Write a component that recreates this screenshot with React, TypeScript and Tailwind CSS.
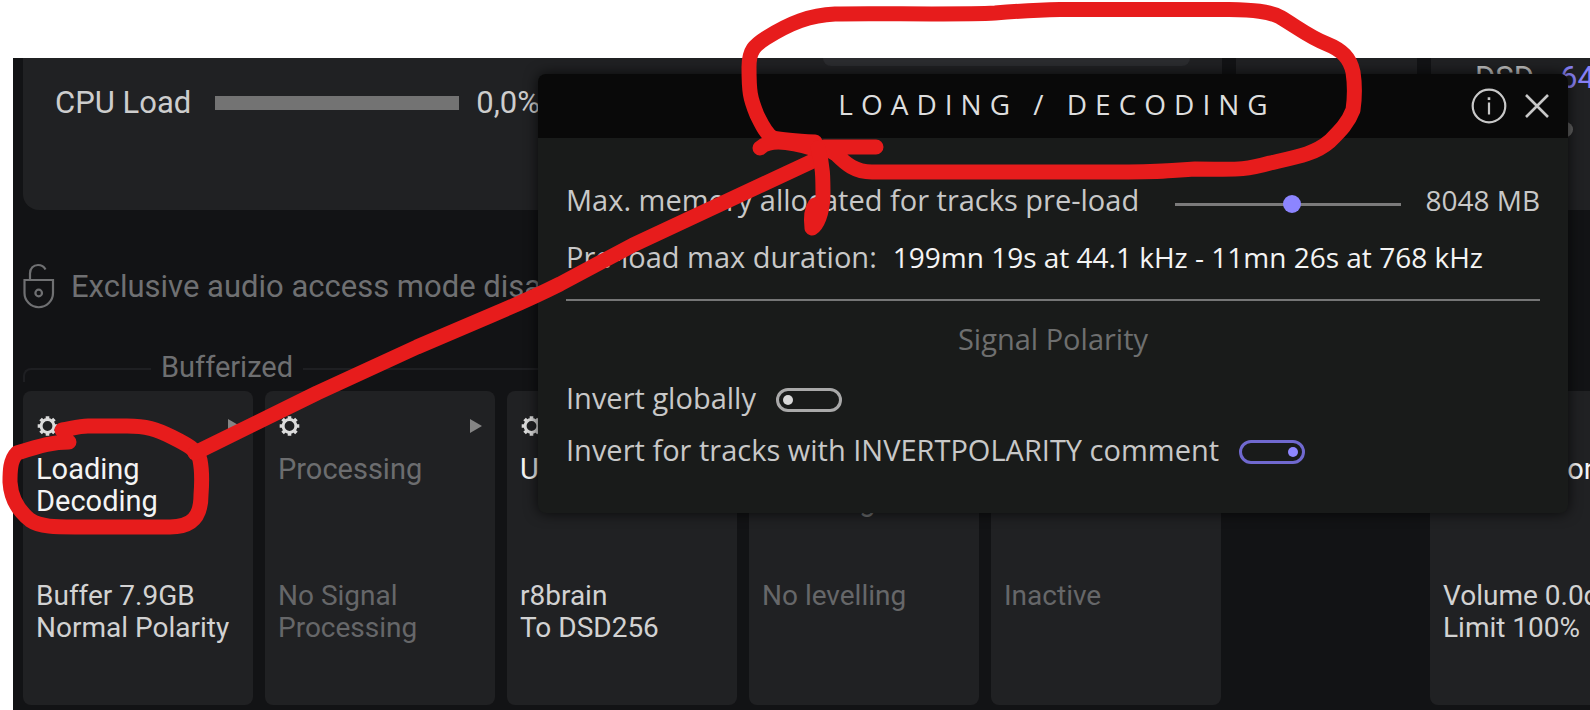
import { useState } from "react";

type Stage = {
  title: string[];
  details: string[];
  active: boolean;
};

const stages: Stage[] = [
  { title: ["Loading", "Decoding"], details: ["Buffer 7.9GB", "Normal Polarity"], active: true },
  { title: ["Processing"], details: ["No Signal", "Processing"], active: false },
  { title: ["Upsampling"], details: ["r8brain", "To DSD256"], active: true },
  { title: ["Volume", "Levelling"], details: ["No levelling"], active: false },
  { title: [], details: ["Inactive"], active: false },
];

const volumeStage: Stage = {
  title: ["Volume Control"],
  details: ["Volume 0.0dB", "Limit 100%"],
  active: true,
};

function GearIcon() {
  return (
    <svg viewBox="0 0 22 22" className="size-[22px]" fill="none" stroke="currentColor" aria-hidden="true">
      <circle cx="11.500" cy="11" r="6.400" strokeWidth="3" />
      <g strokeWidth="3.600">
        <path d="M11.500 1.200v3M11.500 17.800v3M1.700 11h3M18.300 11h3M4.600 4.100l2.200 2.200M16.200 15.700l2.200 2.200M4.600 17.900l2.200-2.200M16.200 6.300l2.200-2.200" />
      </g>
    </svg>
  );
}

function LockIcon() {
  return (
    <svg viewBox="0 0 32 46" className="h-[46px] w-8" fill="none" stroke="currentColor" strokeWidth="2.200" aria-hidden="true">
      <path d="M1.500 17h28.500v13a14.250 14.250 0 0 1-28.500 0z" />
      <path d="M7 17V10.500C7 5 10.500 2 15 2c3.500 0 6 1.500 7.500 4.500" />
      <circle cx="15.700" cy="30" r="3.300" />
    </svg>
  );
}

function StageCard({ stage }: { stage: Stage }) {
  return (
    <article className="h-[314px] w-[230px] shrink-0 rounded-lg bg-[#202123] px-[13px] pt-6">
      <div className="flex h-[22px] items-center justify-between">
        <button type="button" aria-label="Stage settings" className="text-[#dcdcdc]">
          <GearIcon />
        </button>
        <svg viewBox="0 0 12 14" className="h-3.5 w-3" aria-hidden="true">
          <path d="M0 0l12 7-12 7z" fill="#858585" />
        </svg>
      </div>
      <h2 className={`mt-4 h-16 text-[29px] leading-8 whitespace-nowrap ${stage.active ? "text-[#f4f4f4]" : "text-[#6c6d6f]"}`}>
        {stage.title.map((line) => (
          <span key={line} className="block">{line}</span>
        ))}
      </h2>
      <p className={`mt-[63px] text-[28px] leading-8 whitespace-nowrap ${stage.active ? "text-[#d2d2d2]" : "text-[#666769]"}`}>
        {stage.details.map((line) => (
          <span key={line} className="block">{line}</span>
        ))}
      </p>
    </article>
  );
}

function Toggle({ id, defaultChecked }: { id: string; defaultChecked?: boolean }) {
  return (
    <input
      id={id}
      type="checkbox"
      role="switch"
      defaultChecked={defaultChecked}
      className="mt-1 ml-5 flex h-6 w-[66px] shrink-0 appearance-none items-center rounded-full border-3 border-[#a9a9a9] px-1 before:size-[10px] before:rounded-full before:bg-[#d8d8d8] checked:justify-end checked:border-[#7069cf] checked:before:bg-[#8f87ff]"
    />
  );
}

function SettingsDialog() {
  const [memory, setMemory] = useState(8048);
  return (
    <section
      role="dialog"
      aria-labelledby="dialog-title"
      className="absolute top-4 right-[22px] left-[525px] overflow-hidden rounded-lg bg-[#191b1a] font-['Open_Sans',sans-serif] text-[29px] leading-10 whitespace-nowrap text-[#c8c8c8] shadow-[0_0_14px_rgba(0,0,0,0.75)]"
    >
      <header className="relative flex h-16 items-center justify-center bg-[#090909]">
        <h1 id="dialog-title" className="pb-1 pl-2 text-[28px] tracking-[8px] text-[#dedede]">LOADING / DECODING</h1>
        <div className="absolute right-[19px] flex items-center gap-[18px] text-[#c8c8c8]">
          <button type="button" aria-label="Information">
            <svg viewBox="0 0 36 36" className="size-9" fill="none" stroke="currentColor" strokeWidth="2.200">
              <circle cx="18" cy="18" r="16.300" />
              <path d="M18 14.500V26.500" />
              <path d="M18 9.300v2.800" strokeWidth="2.600" />
            </svg>
          </button>
          <button type="button" aria-label="Close">
            <svg viewBox="0 0 24 24" className="size-6" fill="none" stroke="currentColor" strokeWidth="2.600">
              <path d="M1 1l22 22M23 1L1 23" />
            </svg>
          </button>
        </div>
      </header>
      <div className="px-7 pt-[42px] pb-[41px]">
        <div className="flex items-center">
          <label htmlFor="memory">Max. memory allocated for tracks pre-load</label>
          <input
            id="memory"
            type="range"
            min={0}
            max={15560}
            value={memory}
            onChange={(e) => setMemory(Number(e.target.value))}
            className="mt-2 ml-auto h-[18px] w-[226px] appearance-none bg-[linear-gradient(#7b7b7b,#7b7b7b)] bg-[length:100%_3px] bg-center bg-no-repeat [&::-webkit-slider-thumb]:size-[18px] [&::-webkit-slider-thumb]:appearance-none [&::-webkit-slider-thumb]:rounded-full [&::-webkit-slider-thumb]:bg-[#8c85ff]"
          />
          <output htmlFor="memory" className="ml-6 text-[28px]">{memory} MB</output>
        </div>
        <p className="mt-[17px] flex items-baseline gap-4">
          <span>Pre-load max duration:</span>
          <span className="text-[28px] text-[#f4f4f4]">199mn 19s at 44.1 kHz - 11mn 26s at 768 kHz</span>
        </p>
        <hr className="mt-[22px] border-t-2 border-[#757676]" />
        <h2 className="mt-[18px] text-center text-[#6e6f6f]">Signal Polarity</h2>
        <div className="mt-[19px] flex items-center">
          <label htmlFor="invert-all">Invert globally</label>
          <Toggle id="invert-all" />
        </div>
        <div className="mt-3 flex items-center pb-0.5">
          <label htmlFor="invert-tagged">Invert for tracks with INVERTPOLARITY comment</label>
          <Toggle id="invert-tagged" defaultChecked />
        </div>
      </div>
    </section>
  );
}

function Annotations() {
  return (
    <svg
      viewBox="0 0 1590 710"
      className="pointer-events-none absolute top-0 left-0 h-[710px] w-[1590px]"
      fill="none"
      stroke="#e71c1c"
      strokeWidth="15"
      strokeLinecap="round"
      strokeLinejoin="round"
      aria-hidden="true"
    >
      <path d="M69 442C54 442 42 445 17 453C10 460 10 472 10 482C11 500 20 512 30 520C40 527 56 527 75 527H170C192 527 201 517 201 495C202 482 202 470 200 460C198 450 186 444 172 437C156 429 146 426 127 426H88C78 426 70 429 62 430" />
      <path d="M195 453L317 393L417 347L492 315Q530 299 560 284L633 245L815 160" />
      <path d="M760 148C768 140 785 140 815 149M815 142C795 141 782 140 773 138C766 134 762 125 757 115C750 98 749 92 749 67C749 50 755 45 766 38C790 23 810 15 835 14C870 13 960 15 995 13C1020 11 1035 10 1060 9.500H1229C1253 10 1269 11 1280 17C1297 27 1309 37 1327 44C1342 50 1350 58 1353 72C1355 85 1355 96 1353 110C1348 123 1341 130 1330 141C1315 154 1297 157 1270 163C1242 171 1235 169 1195 169C1160 171 1170 172 1120 172H872C855 172 846 164 836 154L824 147H876" />
      <path d="M818 148C823 165 823 178 823 197C822 214 817 225 812 228C811 220 811 211 815 205" />
    </svg>
  );
}

export default function App() {
  return (
    <main className="relative flex min-h-screen flex-col overflow-hidden bg-white pt-[58px] pl-[13px] font-[Roboto,sans-serif]">
      <div className="relative flex-1 overflow-hidden bg-[#121315] pl-2.5">
        <div className="flex h-[152px] gap-3.5">
          <section className="relative w-[1199px] shrink-0 rounded-b-2xl bg-[#202123] px-8 pt-[25px]">
            <div className="absolute top-0 right-8 h-2 w-[367px] rounded-b-lg bg-[#2b2c2f]" />
            <div className="flex items-center text-[31px] leading-10 text-[#cdcdcd]">
              <span>CPU Load</span>
              <div role="meter" aria-label="CPU Load" aria-valuenow={0} className="mr-[17px] ml-6 h-3.5 w-[244px] bg-[#737373]" />
              <span>0,0%</span>
            </div>
          </section>
          <section className="w-[181px] shrink-0 rounded-b-2xl bg-[#202123]" />
          <section className="w-60 shrink-0 rounded-bl-2xl bg-[#202123] pl-11">
            <p className="flex gap-[26px] text-[31px] leading-10 text-[#bdbdbd]">
              <span>DSD</span>
              <span className="text-[#8780f5]">64</span>
            </p>
            <div className="mt-6 h-[15px] w-[98px] rounded-full bg-[#636363]" />
          </section>
        </div>

        <div className="mt-[53px] flex h-[46px] items-center gap-4 text-[31px] leading-10 whitespace-nowrap text-[#6f7072]">
          <LockIcon />
          <p className="pt-0.5">Exclusive audio access mode disabled</p>
        </div>

        <div className="mt-[42px] flex h-8 w-[714px] gap-2.5 text-[29px] leading-8 text-[#6e6f71]">
          <div className="mt-[17px] h-3.5 w-[128px] rounded-tl-lg border-t-2 border-l-2 border-[#1e1f22]" />
          <span>Bufferized</span>
          <div className="mt-[17px] h-3.5 flex-1 rounded-tr-lg border-t-2 border-r-2 border-[#1e1f22]" />
        </div>

        <div className="mt-2 flex gap-3">
          {stages.map((stage) => (
            <StageCard key={stage.details[0]} stage={stage} />
          ))}
          <div className="w-[185px] shrink-0" />
          <StageCard stage={volumeStage} />
        </div>

        <SettingsDialog />
      </div>
      <Annotations />
    </main>
  );
}
